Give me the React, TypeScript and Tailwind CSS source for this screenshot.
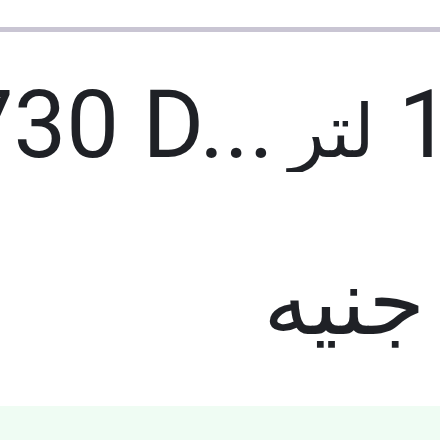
export default function App() {
  return (
    <main className="w-[440px] h-[440px] bg-white flex flex-col overflow-hidden font-['Roboto','DejaVu_Sans',sans-serif] text-[#1f2126]">
      <div className="mt-[27px] h-[5px] bg-[#c9c5d3]" />

      <div className="mt-[46px] flex justify-end overflow-hidden whitespace-pre">
        <span className="-mr-[11px] text-[94px] leading-none shrink-0">
          730 D... <bdi className="-ml-[8px] text-[74px]">لتر</bdi> 1
        </span>
      </div>

      <div className="mt-[85px] flex justify-end pr-[15px]">
        <span className="text-[92px] leading-none" dir="rtl">
          جنيه
        </span>
      </div>

      <div className="mt-auto h-[34px] bg-[#effcf3]" />
    </main>
  );
}
